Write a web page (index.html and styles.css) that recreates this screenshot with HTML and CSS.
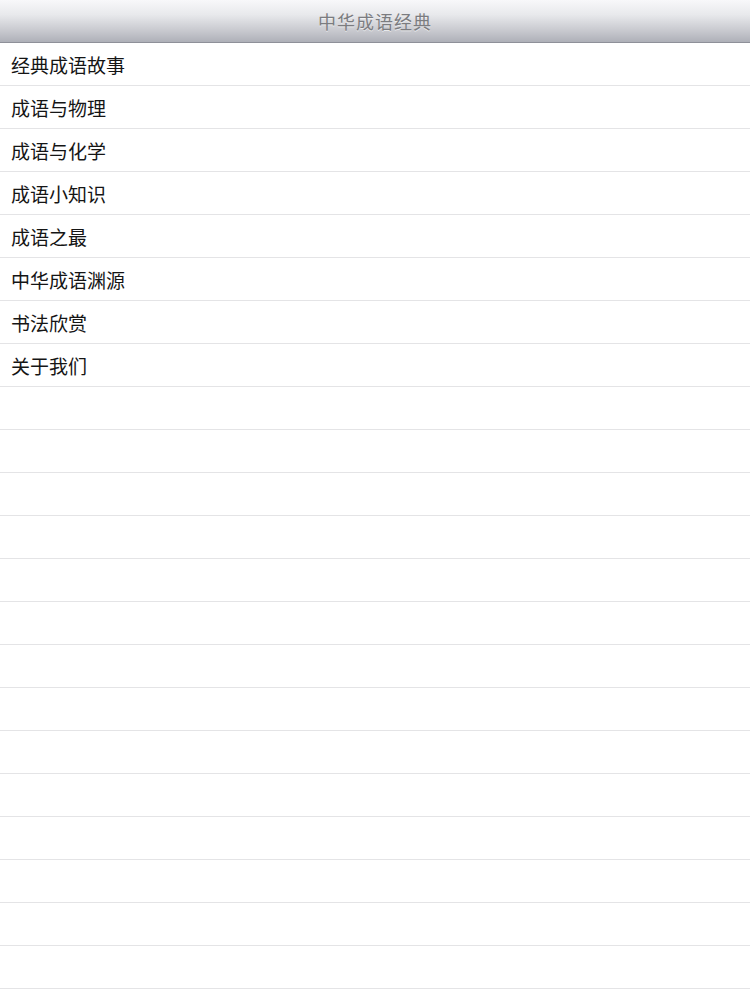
FILE: index.html
```html
<!DOCTYPE html>
<html lang="zh">
<head>
<meta charset="utf-8">
<title>中华成语经典</title>
<link rel="stylesheet" href="styles.css">
</head>
<body>
<header class="navbar"><h1 class="title">中华成语经典</h1></header>
<ul class="list">
<li class="row">经典成语故事</li>
<li class="row">成语与物理</li>
<li class="row">成语与化学</li>
<li class="row">成语小知识</li>
<li class="row">成语之最</li>
<li class="row">中华成语渊源</li>
<li class="row">书法欣赏</li>
<li class="row">关于我们</li>
<li class="row"></li>
<li class="row"></li>
<li class="row"></li>
<li class="row"></li>
<li class="row"></li>
<li class="row"></li>
<li class="row"></li>
<li class="row"></li>
<li class="row"></li>
<li class="row"></li>
<li class="row"></li>
<li class="row"></li>
<li class="row"></li>
<li class="row"></li>
</ul>
</body>
</html>
```
FILE: styles.css
```css
html, body {
  margin: 0;
  padding: 0;
  background: #ffffff;
  height: 1000px;
  overflow: hidden;
  font-family: "Noto Sans CJK SC", "Liberation Sans", sans-serif;
}
.navbar {
  height: 43px;
  box-sizing: border-box;
  border-bottom: 1px solid #8e9099;
  background: linear-gradient(to bottom, #f8f8fa 0%, #e8e9ec 35%, #c6c7cd 75%, #aeb0b8 100%);
  display: flex;
  align-items: center;
  justify-content: center;
}
.title {
  margin: 0;
  font-size: 18px;
  font-weight: 400;
  color: #7b7c80;
  text-shadow: 0 1px 0 rgba(255,255,255,0.6);
  letter-spacing: 1px;
}
.list {
  list-style: none;
  margin: 0;
  padding: 0;
}
.row {
  height: 42px;
  border-bottom: 1px solid #e4e4e6;
  display: flex;
  align-items: center;
  padding-left: 11px;
  font-size: 19px;
  color: #151515;
  line-height: 1;
}
```
